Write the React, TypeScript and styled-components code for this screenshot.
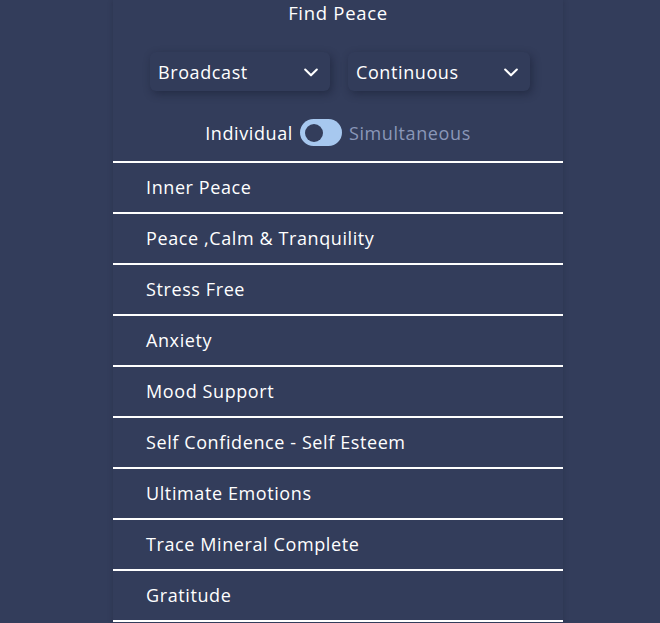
import React from "react";
import styled, { createGlobalStyle } from "styled-components";

const Global = createGlobalStyle`
  html, body { margin: 0; padding: 0; background: #333d5b; }
  body { font-family: "Open Sans", "Liberation Sans", sans-serif; color: #fff; }
`;

const Page = styled.div`
  width: 660px;
  height: 623px;
  overflow: hidden;
  background: #333d5b;
`;

const Column = styled.div`
  width: 450px;
  margin-left: 113px;
  min-height: 623px;
  display: flex;
  flex-direction: column;
  align-items: center;
  box-shadow: 0 0 5px rgba(20, 26, 45, 0.25);
`;

const Title = styled.h1`
  margin: 2px 0 0;
  font-size: 18.5px;
  font-weight: 400;
  line-height: 22px;
  letter-spacing: 0.7px;
`;

const Selects = styled.div`
  display: flex;
  gap: 18px;
  margin-top: 28px;
  margin-left: 4px;
`;

const Select = styled.div<{ $w: number }>`
  width: ${(p) => p.$w}px;
  height: 39px;
  box-sizing: border-box;
  padding: 0 9px 0 8px;
  display: flex;
  align-items: center;
  justify-content: space-between;
  border-radius: 6px;
  background: #323c5a;
  box-shadow: 2px 3px 8px rgba(18, 24, 42, 0.45);
  font-size: 18px;
  letter-spacing: 0.6px;
`;

const ToggleRow = styled.div`
  display: flex;
  align-items: center;
  gap: 7px;
  margin-top: 28px;
  font-size: 18px;
  letter-spacing: 0.6px;
`;

const Label = styled.span<{ $dim?: boolean }>`
  color: ${(p) => (p.$dim ? "#8a97b8" : "#ffffff")};
`;

const Track = styled.div`
  width: 42px;
  height: 27px;
  border-radius: 14px;
  background: #a7c8ef;
  display: flex;
  align-items: center;
  padding-left: 5px;
  box-sizing: border-box;
`;

const Knob = styled.div`
  width: 18px;
  height: 18px;
  border-radius: 50%;
  background: #333d5b;
`;

const List = styled.ul`
  list-style: none;
  margin: 15px 0 0;
  padding: 0;
  width: 100%;
  border-top: 2px solid #fff;
`;

const Item = styled.li`
  height: 49px;
  box-sizing: content-box;
  border-bottom: 2px solid #fff;
  display: flex;
  align-items: center;
  padding: 0 0 0 33px;
  font-size: 18px;
  letter-spacing: 0.6px;
  line-height: 22px;
  & > span { margin-bottom: 2px; }
`;

const Chevron = () => (
  <svg width="20" height="20" viewBox="0 0 24 24" fill="none" stroke="#fff" strokeWidth="2.5" strokeLinecap="round" strokeLinejoin="round">
    <path d="M5 9l7 7 7-7" />
  </svg>
);

const items = [
  "Inner Peace",
  "Peace ,Calm & Tranquility",
  "Stress Free",
  "Anxiety",
  "Mood Support",
  "Self Confidence - Self Esteem",
  "Ultimate Emotions",
  "Trace Mineral Complete",
  "Gratitude",
];

export default function App() {
  return (
    <Page>
      <Global />
      <Column>
        <Title>Find Peace</Title>
        <Selects>
          <Select $w={180}>
            <span>Broadcast</span>
            <Chevron />
          </Select>
          <Select $w={182}>
            <span>Continuous</span>
            <Chevron />
          </Select>
        </Selects>
        <ToggleRow>
          <Label>Individual</Label>
          <Track>
            <Knob />
          </Track>
          <Label $dim>Simultaneous</Label>
        </ToggleRow>
        <List>
          {items.map((t) => (
            <Item key={t}>
              <span>{t}</span>
            </Item>
          ))}
        </List>
      </Column>
    </Page>
  );
}
